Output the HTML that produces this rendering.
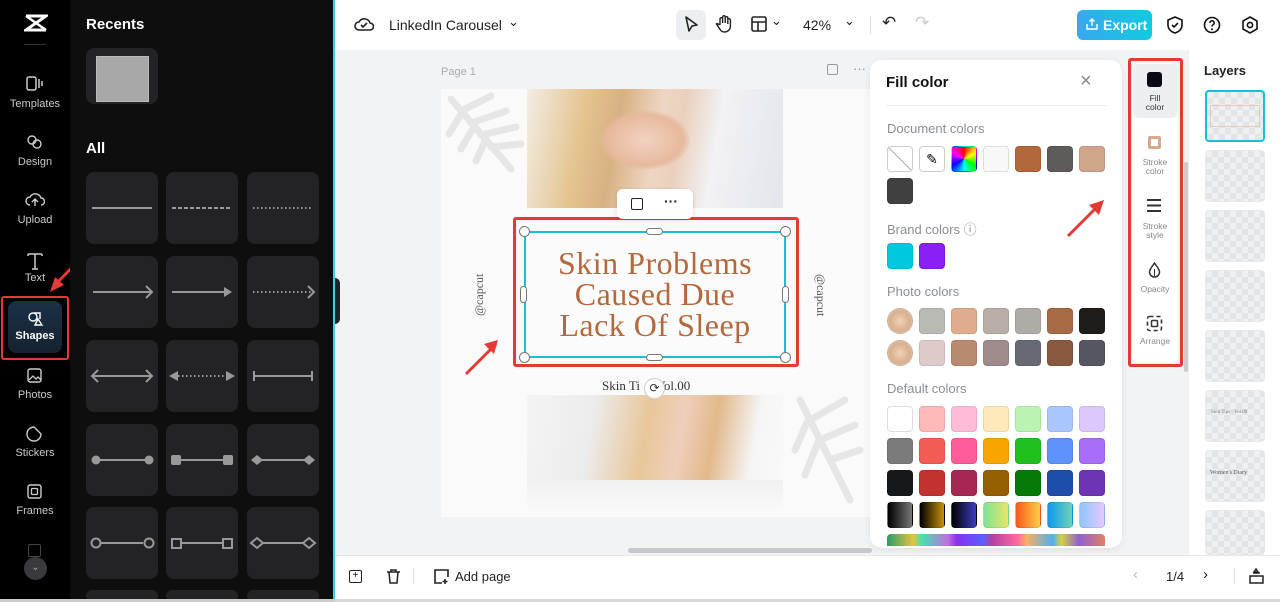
<!DOCTYPE html>
<html><head><meta charset="utf-8"><style>
*{box-sizing:border-box;margin:0;padding:0}
html{width:1280px;height:602px;overflow:hidden}
body{width:1280px;height:602px;overflow:hidden;font-family:"Liberation Sans",sans-serif;background:#f1f3f5;position:relative}
.a{position:absolute}
.nav{left:0;top:0;width:70px;height:602px;background:#000}
.nl{position:absolute;left:0;width:70px;text-align:center;color:#c9c9cc;font-size:11px}
.panel{left:70px;top:0;width:263px;height:602px;background:#0e0e0f;overflow:hidden}
.tile{position:absolute;width:72px;height:72px;background:#232326;border-radius:8px}
.tile svg{position:absolute;left:0;top:0}
.sw{position:absolute;width:26px;height:26px;border-radius:4px;border:1px solid rgba(0,0,0,.08)}
.lab{position:absolute;left:887px;color:#8a8f98;font-size:13px}
.lay{position:absolute;left:1205px;width:60px;height:52px;border-radius:4px;background-color:#eef0f2;background-image:linear-gradient(45deg,#e2e4e7 25%,transparent 25%,transparent 75%,#e2e4e7 75%),linear-gradient(45deg,#e2e4e7 25%,transparent 25%,transparent 75%,#e2e4e7 75%);background-size:12px 12px;background-position:0 0,6px 6px;border:1px solid #e6e8eb}
.tl{position:absolute;left:1130px;width:50px;text-align:center;color:#888;font-size:8.5px;line-height:9px}
</style></head><body>
<!-- nav -->
<div class="a nav">
 <svg class="a" style="left:24px;top:14px" width="24" height="18" viewBox="0 0 24 18"><path d="M2 2h20L2 16h20" stroke="#fff" stroke-width="3" fill="none"/><path d="M2 2l20 14M22 2L2 16" stroke="#fff" stroke-width="2.5" fill="none"/></svg>
 <div class="a" style="left:24px;top:44px;width:22px;height:1px;background:#333"></div>
 <svg class="a" style="left:26px;top:76px" width="18" height="16"><rect x="1" y="1" width="9" height="13" rx="2" stroke="#ccc" fill="none" stroke-width="1.5"/><path d="M13 3v9M16 5v5" stroke="#ccc" stroke-width="1.5"/></svg>
 <div class="nl" style="top:98px">Templates</div>
 <svg class="a" style="left:26px;top:134px" width="18" height="16"><circle cx="6" cy="6" r="4" stroke="#ccc" fill="none" stroke-width="1.4"/><circle cx="11" cy="10" r="4" stroke="#ccc" fill="none" stroke-width="1.4"/></svg>
 <div class="nl" style="top:156px">Design</div>
 <svg class="a" style="left:25px;top:192px" width="20" height="16"><path d="M5 13a4 4 0 010-8 6 6 0 0111 1 3.5 3.5 0 010 7M10 14V8M7 10l3-3 3 3" stroke="#ccc" fill="none" stroke-width="1.4"/></svg>
 <div class="nl" style="top:214px">Upload</div>
 <svg class="a" style="left:27px;top:252px" width="16" height="18"><path d="M1 2h14M8 2v15M1 2v2M15 2v2M5 17h6" stroke="#ccc" fill="none" stroke-width="1.5"/></svg>
 <div class="nl" style="top:272px">Text</div>
 <div class="a" style="left:1px;top:296px;width:68px;height:64px;border:2px solid #e53935;border-radius:3px"></div>
 <div class="a" style="left:8px;top:301px;width:54px;height:52px;border-radius:8px;background:linear-gradient(#1b3047,#15222f)"></div>
 <svg class="a" style="left:26px;top:310px" width="18" height="16"><path d="M8 3l6 0 0 6" stroke="#fff" fill="none" stroke-width="1.4"/><circle cx="7" cy="7" r="4" stroke="#fff" fill="none" stroke-width="1.4"/><path d="M9 15l3-6 4 6z" stroke="#fff" fill="none" stroke-width="1.4"/></svg>
 <div class="nl" style="top:330px;color:#fff;font-weight:bold">Shapes</div>
 <svg class="a" style="left:27px;top:368px" width="16" height="16"><rect x="1" y="1" width="13" height="13" rx="2" stroke="#ccc" fill="none" stroke-width="1.4"/><path d="M2 12l4-4 3 3 2-2 3 3" stroke="#ccc" fill="none" stroke-width="1.3"/></svg>
 <div class="nl" style="top:389px">Photos</div>
 <svg class="a" style="left:26px;top:426px" width="17" height="16"><path d="M8 1a7 7 0 107 7l-7-7z" stroke="#ccc" fill="none" stroke-width="1.4"/></svg>
 <div class="nl" style="top:447px">Stickers</div>
 <svg class="a" style="left:27px;top:484px" width="16" height="16"><rect x="1" y="1" width="13" height="13" rx="2" stroke="#ccc" fill="none" stroke-width="1.4"/><rect x="4.5" y="4.5" width="6" height="6" rx="1" stroke="#ccc" fill="none" stroke-width="1.3"/></svg>
 <div class="nl" style="top:505px">Frames</div>
 <div class="a" style="left:28px;top:544px;width:13px;height:13px;border:1.5px solid #444;border-radius:2px"></div>
 <div class="a" style="left:24px;top:557px;width:23px;height:23px;border-radius:50%;background:#3a3a3e;color:#aaa;font-size:10px;text-align:center;line-height:22px">⌄</div>
</div>
<svg class="a" style="left:47px;top:252px" width="40" height="44"><path d="M37 3L9 32" stroke="#e53935" stroke-width="3"/><path d="M3 40l5-15 9 8z" fill="#e53935"/></svg>
<!-- panel -->
<div class="a panel">
 <div class="a" style="left:16px;top:16px;color:#fff;font-weight:bold;font-size:15px">Recents</div>
 <div class="tile" style="left:16px;top:48px;height:56px;width:72px"><div class="a" style="left:10px;top:8px;width:53px;height:46px;background:#a8a8a8;border:1px solid #bbb"></div></div>
 <div class="a" style="left:16px;top:140px;color:#fff;font-weight:bold;font-size:15px">All</div>
 <div class="tile" style="left:16px;top:172px"><svg width="72" height="72"><path d="M6 36h60" stroke="#999" stroke-width="2"/></svg></div>
 <div class="tile" style="left:96px;top:172px"><svg width="72" height="72"><path d="M6 36h60" stroke="#999" stroke-width="2" stroke-dasharray="4 2"/></svg></div>
 <div class="tile" style="left:177px;top:172px"><svg width="72" height="72"><path d="M6 36h60" stroke="#999" stroke-width="2" stroke-dasharray="1.5 2.5"/></svg></div>
 <div class="tile" style="left:16px;top:256px"><svg width="72" height="72"><path d="M7 36h59M60 30l6 6-6 6" stroke="#999" stroke-width="2" fill="none"/></svg></div>
 <div class="tile" style="left:96px;top:256px"><svg width="72" height="72"><path d="M6 36h52" stroke="#999" stroke-width="2"/><path d="M58 31l8 5-8 5z" fill="#999"/></svg></div>
 <div class="tile" style="left:177px;top:256px"><svg width="72" height="72"><path d="M6 36h58" stroke="#999" stroke-width="2" stroke-dasharray="1.5 2.5"/><path d="M61 30l6 6-6 6" stroke="#999" stroke-width="2" fill="none"/></svg></div>
 <div class="tile" style="left:16px;top:340px"><svg width="72" height="72"><path d="M6 36h60M12 30l-6 6 6 6M60 30l6 6-6 6" stroke="#999" stroke-width="2" fill="none"/></svg></div>
 <div class="tile" style="left:96px;top:340px"><svg width="72" height="72"><path d="M12 36h48" stroke="#999" stroke-width="2" stroke-dasharray="1.5 2.5"/><path d="M3 36l9-5v10zM69 36l-9-5v10z" fill="#999"/></svg></div>
 <div class="tile" style="left:177px;top:340px"><svg width="72" height="72"><path d="M7 36h58M7 31v10M65 31v10" stroke="#999" stroke-width="2"/></svg></div>
 <div class="tile" style="left:16px;top:424px"><svg width="72" height="72"><path d="M8 36h56" stroke="#999" stroke-width="2"/><circle cx="10" cy="36" r="4.5" fill="#999"/><circle cx="63" cy="36" r="4.5" fill="#999"/></svg></div>
 <div class="tile" style="left:96px;top:424px"><svg width="72" height="72"><path d="M8 36h56" stroke="#999" stroke-width="2"/><rect x="5" y="31" width="10" height="10" rx="2" fill="#999"/><rect x="57" y="31" width="10" height="10" rx="2" fill="#999"/></svg></div>
 <div class="tile" style="left:177px;top:424px"><svg width="72" height="72"><path d="M8 36h56" stroke="#999" stroke-width="2"/><path d="M4 36l6-5 6 5-6 5zM56 36l6-5 6 5-6 5z" fill="#999"/></svg></div>
 <div class="tile" style="left:16px;top:507px"><svg width="72" height="72"><path d="M15 36h42" stroke="#999" stroke-width="2"/><circle cx="10" cy="36" r="4.5" stroke="#999" stroke-width="2" fill="none"/><circle cx="63" cy="36" r="4.5" stroke="#999" stroke-width="2" fill="none"/></svg></div>
 <div class="tile" style="left:96px;top:507px"><svg width="72" height="72"><path d="M15 36h42" stroke="#999" stroke-width="2"/><rect x="6" y="32" width="9" height="9" stroke="#999" stroke-width="2" fill="none"/><rect x="57" y="32" width="9" height="9" stroke="#999" stroke-width="2" fill="none"/></svg></div>
 <div class="tile" style="left:177px;top:507px"><svg width="72" height="72"><path d="M16 36h40" stroke="#999" stroke-width="2"/><path d="M4 36l6-5 6 5-6 5zM56 36l6-5 6 5-6 5z" stroke="#999" stroke-width="2" fill="none"/></svg></div>
 <div class="tile" style="left:16px;top:590px;height:12px"></div><div class="tile" style="left:96px;top:590px;height:12px"></div><div class="tile" style="left:177px;top:590px;height:12px"></div>
</div>
<div class="a" style="left:333px;top:0;width:2px;height:602px;background:#3fd2e0"></div>
<div class="a" style="left:335px;top:278px;width:5px;height:46px;background:#222;border-radius:0 6px 6px 0"></div>
<!-- top bar -->
<div class="a" style="left:335px;top:0;width:945px;height:50px;background:#fff"></div>
<svg class="a" style="left:354px;top:16px" width="20" height="16"><path d="M5 14a4 4 0 010-8 6 6 0 0111 1 3.5 3.5 0 010 7z M7 9l2 2 4-4" stroke="#222" fill="none" stroke-width="1.6"/></svg>
<div class="a" style="left:389px;top:17px;font-size:14px;color:#222">LinkedIn Carousel</div>
<div class="a" style="left:508px;top:14px;font-size:13px;color:#222">⌄</div>
<div class="a" style="left:676px;top:10px;width:30px;height:30px;background:#eceef1;border-radius:6px"></div>
<svg class="a" style="left:682px;top:15px" width="18" height="20"><path d="M4 2l11 8-5 1-3 5z" stroke="#222" fill="none" stroke-width="1.6" stroke-linejoin="round"/></svg>
<svg class="a" style="left:715px;top:14px" width="18" height="20"><path d="M5 11V5a1.3 1.3 0 012.6 0v4V3a1.3 1.3 0 012.6 0v6V4a1.3 1.3 0 012.6 0v6V6a1.3 1.3 0 012.6 0v6c0 4-3 6-6 6-3 0-4-2-6-5l-2-3c1-1 2 0 3 1" stroke="#222" fill="none" stroke-width="1.4"/></svg>
<svg class="a" style="left:751px;top:16px" width="16" height="16"><rect x="1" y="1" width="14" height="14" rx="1.5" stroke="#222" fill="none" stroke-width="1.6"/><path d="M1 6h14M7 6v9" stroke="#222" stroke-width="1.6"/></svg>
<div class="a" style="left:771px;top:13px;font-size:13px;color:#222">⌄</div>
<div class="a" style="left:803px;top:17px;font-size:14px;color:#222">42%</div>
<div class="a" style="left:844px;top:13px;font-size:13px;color:#222">⌄</div>
<div class="a" style="left:870px;top:16px;width:1px;height:18px;background:#ddd"></div>
<div class="a" style="left:882px;top:13px;font-size:17px;color:#222">↶</div>
<div class="a" style="left:915px;top:13px;font-size:17px;color:#ccc">↷</div>
<div class="a" style="left:1077px;top:10px;width:75px;height:30px;border-radius:6px;background:linear-gradient(90deg,#38a7f0,#10cbe0);color:#fff;font-weight:bold;font-size:14px;line-height:30px;padding-left:26px">Export</div>
<svg class="a" style="left:1085px;top:17px" width="14" height="14"><path d="M2 7v5h10V7M7 9V2M4.5 4.5L7 2l2.5 2.5" stroke="#fff" fill="none" stroke-width="1.4"/></svg>
<svg class="a" style="left:1166px;top:16px" width="18" height="18"><path d="M9 1l7 3v5c0 4-3 7-7 8-4-1-7-4-7-8V4z M6 9l2 2 4-4" stroke="#111" fill="none" stroke-width="1.6"/></svg>
<svg class="a" style="left:1203px;top:16px" width="18" height="18"><circle cx="9" cy="9" r="7.5" stroke="#111" fill="none" stroke-width="1.6"/><path d="M6.8 7a2.2 2.2 0 114 1.2c-1 .8-1.8 1-1.8 2.3" stroke="#111" fill="none" stroke-width="1.5"/><circle cx="9" cy="13.3" r="1" fill="#111"/></svg>
<svg class="a" style="left:1241px;top:16px" width="18" height="18"><path d="M9 1l7 4v8l-7 4-7-4V5z" stroke="#111" fill="none" stroke-width="1.6"/><circle cx="9" cy="9" r="2.6" stroke="#111" fill="none" stroke-width="1.6"/></svg>
<!-- canvas -->
<div class="a" style="left:441px;top:66px;font-size:11px;color:#aaa">Page 1</div>
<div class="a" style="left:827px;top:64px;width:11px;height:11px;border:1.5px solid #999;border-radius:2px"></div>
<div class="a" style="left:853px;top:61px;font-size:13px;color:#888">···</div>
<div class="a" style="left:441px;top:89px;width:430px;height:428px;background:#fafafa"></div>
<svg class="a" style="left:441px;top:89px" width="90" height="90"><g stroke="#e6e6e6" stroke-width="7" fill="none" stroke-linecap="round"><path d="M10 10l60 70"/><path d="M20 22l30-15M30 34l35-12M40 46l35-8M50 58l30-3M22 22L8 45M34 36L20 60M45 50L35 72"/></g></svg>
<svg class="a" style="left:790px;top:380px" width="80" height="130"><g stroke="#e6e6e6" stroke-width="7" fill="none" stroke-linecap="round"><path d="M10 20l50 100"/><path d="M20 40l35-20M30 60l35-15M40 80l30-10M18 40L5 70M28 62L15 95"/></g></svg>
<div class="a" style="left:527px;top:89px;width:256px;height:119px;background:linear-gradient(100deg,#f3ede5 0%,#e4c48f 22%,#d7b183 35%,#efd6c4 50%,#ead0bd 58%,#f2f2f5 72%,#e3e5ec 100%)"></div>
<div class="a" style="left:600px;top:110px;width:90px;height:60px;border-radius:50%;background:radial-gradient(#f2d2c0,#e7b99d 60%,transparent 72%)"></div>
<div class="a" style="left:527px;top:395px;width:256px;height:122px;background:linear-gradient(100deg,#f4f4f4 0%,#ececec 25%,#e8c79a 45%,#efcfbb 58%,#e2b98b 70%,#f5f5f5 85%,#fafafa 100%)"></div>
<div class="a" style="left:527px;top:480px;width:256px;height:37px;background:linear-gradient(#f0f0f0,#fbfbfb)"></div>
<div class="a" style="left:472px;top:250px;width:20px;height:90px;font-family:'Liberation Serif',serif;font-size:12px;color:#555;writing-mode:vertical-rl;transform:rotate(180deg);text-align:center">@capcut</div>
<div class="a" style="left:808px;top:250px;width:20px;height:90px;font-family:'Liberation Serif',serif;font-size:12px;color:#555;writing-mode:vertical-rl;text-align:center">@capcut</div>
<div class="a" style="left:602px;top:378px;font-family:'Liberation Serif',serif;font-size:13px;color:#333">Skin Ti&nbsp;&nbsp;&nbsp;&nbsp;&nbsp;Vol.00</div>
<div class="a" style="left:524px;top:231px;width:262px;height:127px;background:#fbfbfb"></div>
<div class="a" style="left:524px;top:231px;width:262px;height:127px;border:2px solid #16c0d6"></div>
<div class="a" style="left:513px;top:217px;width:286px;height:150px;border:3px solid #e53935;border-radius:3px"></div>
<div class="a" style="left:524px;top:248px;width:262px;text-align:center;font-family:'Liberation Serif',serif;font-size:32px;line-height:31px;color:#b4683d;letter-spacing:0.5px">Skin Problems<br>Caused Due<br>Lack Of Sleep</div>
<div class="a" style="left:519px;top:226px;width:11px;height:11px;border-radius:50%;background:#fff;border:1px solid #777"></div>
<div class="a" style="left:780px;top:226px;width:11px;height:11px;border-radius:50%;background:#fff;border:1px solid #777"></div>
<div class="a" style="left:519px;top:352px;width:11px;height:11px;border-radius:50%;background:#fff;border:1px solid #777"></div>
<div class="a" style="left:780px;top:352px;width:11px;height:11px;border-radius:50%;background:#fff;border:1px solid #777"></div>
<div class="a" style="left:646px;top:228px;width:17px;height:7px;border-radius:4px;background:#fff;border:1px solid #777"></div>
<div class="a" style="left:646px;top:354px;width:17px;height:7px;border-radius:4px;background:#fff;border:1px solid #777"></div>
<div class="a" style="left:520px;top:286px;width:7px;height:17px;border-radius:4px;background:#fff;border:1px solid #777"></div>
<div class="a" style="left:782px;top:286px;width:7px;height:17px;border-radius:4px;background:#fff;border:1px solid #777"></div>
<div class="a" style="left:644px;top:378px;width:21px;height:21px;border-radius:50%;background:#fff;border:1px solid #ccc;font-size:12px;text-align:center;line-height:19px;color:#333">⟳</div>
<div class="a" style="left:617px;top:189px;width:76px;height:30px;background:#fff;border-radius:6px;box-shadow:0 1px 4px rgba(0,0,0,.15)"></div>
<div class="a" style="left:631px;top:198px;width:12px;height:12px;border:1.5px solid #222;border-radius:2px"></div>
<div class="a" style="left:664px;top:193px;font-size:14px;font-weight:bold;color:#222">···</div>
<svg class="a" style="left:462px;top:338px" width="40" height="40"><path d="M4 36L34 6" stroke="#e53935" stroke-width="3"/><path d="M36 2l-4 14-10-10z" fill="#e53935"/></svg>
<div class="a" style="left:628px;top:548px;width:244px;height:5px;background:#c5c8cc;border-radius:3px"></div>
<!-- fill panel -->
<div class="a" style="left:870px;top:60px;width:252px;height:488px;background:#fff;border-radius:12px;box-shadow:0 2px 8px rgba(0,0,0,.08)"></div>
<div class="a" style="left:886px;top:74px;font-size:15px;font-weight:bold;color:#111">Fill color</div>
<div class="a" style="left:1080px;top:70px;font-size:20px;color:#888">×</div>
<div class="a" style="left:886px;top:105px;width:221px;height:1px;background:#eee"></div>
<div class="lab" style="top:121px">Document colors</div>
<div class="sw" style="left:887px;top:146px;background:linear-gradient(45deg,#fff 48%,#aaa 49%,#aaa 51%,#fff 52%);border-color:#ccc"></div>
<div class="sw" style="left:919px;top:146px;background:#fff;border-color:#ccc;text-align:center;font-size:14px;line-height:24px">✎</div>
<div class="sw" style="left:951px;top:146px;background:conic-gradient(red,yellow,lime,cyan,blue,magenta,red)"></div>
<div class="sw" style="left:983px;top:146px;background:#f8f8f8;border-color:#ddd"></div>
<div class="sw" style="left:1015px;top:146px;background:#b3673d"></div>
<div class="sw" style="left:1047px;top:146px;background:#5f5b5a"></div>
<div class="sw" style="left:1079px;top:146px;background:#d1a48c"></div>
<div class="sw" style="left:887px;top:178px;background:#404040"></div>
<div class="lab" style="top:219px">Brand colors ⓘ</div>
<div class="sw" style="left:887px;top:243px;background:#00c8de"></div>
<div class="sw" style="left:919px;top:243px;background:#8a1ff6"></div>
<div class="lab" style="top:284px">Photo colors</div>
<div class="sw" style="left:887px;top:308px;border-radius:50%;background:radial-gradient(#f1d2b8,#d8ae8e 60%,#eee)"></div>
<div class="sw" style="left:919px;top:308px;background:#babab4"></div>
<div class="sw" style="left:951px;top:308px;background:#dfad8d"></div>
<div class="sw" style="left:983px;top:308px;background:#b9aea8"></div>
<div class="sw" style="left:1015px;top:308px;background:#afaca8"></div>
<div class="sw" style="left:1047px;top:308px;background:#a86a45"></div>
<div class="sw" style="left:1079px;top:308px;background:#201c19"></div>
<div class="sw" style="left:887px;top:340px;border-radius:50%;background:radial-gradient(#f1d2b8,#d8ae8e 60%,#eee)"></div>
<div class="sw" style="left:919px;top:340px;background:#dccbc8"></div>
<div class="sw" style="left:951px;top:340px;background:#b88a70"></div>
<div class="sw" style="left:983px;top:340px;background:#9f8b8c"></div>
<div class="sw" style="left:1015px;top:340px;background:#676a72"></div>
<div class="sw" style="left:1047px;top:340px;background:#88583f"></div>
<div class="sw" style="left:1079px;top:340px;background:#565660"></div>
<div class="lab" style="top:381px">Default colors</div>
<div class="sw" style="left:887px;top:406px;background:#fff;border-color:#ddd"></div>
<div class="sw" style="left:919px;top:406px;background:#feb8b8"></div>
<div class="sw" style="left:951px;top:406px;background:#ffbcd9"></div>
<div class="sw" style="left:983px;top:406px;background:#ffe8b9"></div>
<div class="sw" style="left:1015px;top:406px;background:#b9f5b0"></div>
<div class="sw" style="left:1047px;top:406px;background:#aac6ff"></div>
<div class="sw" style="left:1079px;top:406px;background:#dcc8ff"></div>
<div class="sw" style="left:887px;top:438px;background:#7b7b7b"></div>
<div class="sw" style="left:919px;top:438px;background:#f35c55"></div>
<div class="sw" style="left:951px;top:438px;background:#fe5c9b"></div>
<div class="sw" style="left:983px;top:438px;background:#f9a500"></div>
<div class="sw" style="left:1015px;top:438px;background:#1fc01e"></div>
<div class="sw" style="left:1047px;top:438px;background:#5d93fb"></div>
<div class="sw" style="left:1079px;top:438px;background:#a86ef8"></div>
<div class="sw" style="left:887px;top:470px;background:#17181c"></div>
<div class="sw" style="left:919px;top:470px;background:#c2322f"></div>
<div class="sw" style="left:951px;top:470px;background:#a52755"></div>
<div class="sw" style="left:983px;top:470px;background:#955e00"></div>
<div class="sw" style="left:1015px;top:470px;background:#047a08"></div>
<div class="sw" style="left:1047px;top:470px;background:#1e4ea9"></div>
<div class="sw" style="left:1079px;top:470px;background:#6d35b5"></div>
<div class="sw" style="left:887px;top:502px;background:linear-gradient(90deg,#000,#777)"></div>
<div class="sw" style="left:919px;top:502px;background:linear-gradient(90deg,#000,#c9910b)"></div>
<div class="sw" style="left:951px;top:502px;background:linear-gradient(90deg,#000,#3d3cc0)"></div>
<div class="sw" style="left:983px;top:502px;background:linear-gradient(90deg,#7ee494,#e8e56a)"></div>
<div class="sw" style="left:1015px;top:502px;background:linear-gradient(90deg,#f8591b,#fcce4a)"></div>
<div class="sw" style="left:1047px;top:502px;background:linear-gradient(90deg,#0f98ef,#6ed3b8)"></div>
<div class="sw" style="left:1079px;top:502px;background:linear-gradient(90deg,#90c3ff,#e5c9ff)"></div>
<div class="a" style="left:887px;top:534px;width:218px;height:12px;background:linear-gradient(90deg,#2a9b6a,#e2c440 12%,#45e0b0 16%,#c06ee0 28%,#8a30f0 32%,#5a60ff 44%,#b040a0 48%,#ff6a9c 60%,#f8b060 64%,#50b0f0 76%,#d8d040 80%,#9060d0 88%,#e08060);border-radius:4px 4px 0 0"></div>
<svg class="a" style="left:1064px;top:196px" width="44" height="44"><path d="M4 40L34 10" stroke="#e53935" stroke-width="3"/><path d="M40 4l-5 15-10-10z" fill="#e53935"/></svg>
<!-- toolbar -->
<div class="a" style="left:1132px;top:63px;width:46px;height:300px;background:#fff;border-radius:8px"></div>
<div class="a" style="left:1133px;top:64px;width:45px;height:54px;background:#eceef1;border-radius:6px"></div>
<div class="a" style="left:1147px;top:72px;width:15px;height:15px;background:#050a14;border-radius:3px"></div>
<div class="tl" style="top:94px;color:#333">Fill<br>color</div>
<div class="a" style="left:1148px;top:136px;width:13px;height:13px;border:3px solid #d8a88f;border-radius:2px"></div>
<div class="tl" style="top:158px">Stroke<br>color</div>
<svg class="a" style="left:1146px;top:198px" width="16" height="16"><path d="M1 2h14M1 7.5h14M1 13h14" stroke="#333" stroke-width="2"/></svg>
<div class="tl" style="top:222px">Stroke<br>style</div>
<svg class="a" style="left:1147px;top:262px" width="15" height="16"><path d="M7.5 1C5 5 2.5 7 2.5 10a5 5 0 0010 0c0-3-2.5-5-5-9z" stroke="#333" fill="none" stroke-width="1.5"/><path d="M7.5 7v7" stroke="#333"/></svg>
<div class="tl" style="top:285px">Opacity</div>
<svg class="a" style="left:1146px;top:315px" width="17" height="17"><rect x="1.5" y="1.5" width="14" height="14" rx="2" stroke="#333" fill="none" stroke-width="1.6" stroke-dasharray="4 3"/><rect x="5.5" y="5.5" width="6" height="6" rx="1" stroke="#333" fill="none" stroke-width="1.5"/></svg>
<div class="tl" style="top:337px">Arrange</div>
<div class="a" style="left:1128px;top:58px;width:55px;height:309px;border:3px solid #e53935;border-radius:3px"></div>
<div class="a" style="left:1184px;top:162px;width:4px;height:210px;background:#ccc;border-radius:2px"></div>
<!-- layers -->
<div class="a" style="left:1188px;top:50px;width:92px;height:505px;background:#fff;border-left:1px solid #eee"></div>
<div class="a" style="left:1204px;top:63px;font-size:13px;font-weight:bold;color:#222">Layers</div>
<div class="lay" style="top:90px;height:52px;border:2px solid #16c0d6"></div>
<div class="a" style="left:1210px;top:105px;width:50px;height:22px;border:1px solid #e8c8b8"></div>
<div class="lay" style="top:150px"></div>
<div class="lay" style="top:210px"></div>
<div class="lay" style="top:270px"></div>
<div class="lay" style="top:330px"></div>
<div class="lay" style="top:390px"></div>
<div class="lay" style="top:450px"></div>
<div class="lay" style="top:510px;height:45px"></div>
<div class="a" style="left:1211px;top:410px;font-size:5px;color:#777;font-family:'Liberation Serif',serif">Skin Tips · Vol.00</div>
<div class="a" style="left:1210px;top:470px;font-size:6px;color:#555;font-family:'Liberation Serif',serif">Women's Diary</div>
<!-- bottom bar -->
<div class="a" style="left:335px;top:555px;width:945px;height:44px;background:#fff;border-top:1px solid #e8e8e8"></div>
<div class="a" style="left:335px;top:599px;width:945px;height:3px;background:#d8d8d8"></div>
<div class="a" style="left:0;top:599px;width:335px;height:3px;background:#ccc"></div>
<div class="a" style="left:349px;top:570px;width:13px;height:13px;border:1.6px solid #222;border-radius:2px;font-size:10px;line-height:10px;text-align:center">+</div>
<svg class="a" style="left:386px;top:569px" width="15" height="15"><path d="M1 3h13M5 3V1h5v2M3 3l1 11h7l1-11" stroke="#222" fill="none" stroke-width="1.5"/></svg>
<div class="a" style="left:413px;top:568px;width:1px;height:16px;background:#ddd"></div>
<svg class="a" style="left:433px;top:568px" width="17" height="17"><path d="M9 15H2V2h13v7M12 11v5M9.5 13.5h5" stroke="#222" fill="none" stroke-width="1.6"/></svg>
<div class="a" style="left:455px;top:569px;font-size:13px;color:#222">Add page</div>
<div class="a" style="left:1133px;top:566px;font-size:15px;color:#bbb">‹</div>
<div class="a" style="left:1166px;top:569px;font-size:13px;color:#222">1/4</div>
<div class="a" style="left:1203px;top:566px;font-size:15px;color:#222">›</div>
<div class="a" style="left:1234px;top:568px;width:1px;height:16px;background:#ddd"></div>
<svg class="a" style="left:1248px;top:568px" width="17" height="16"><path d="M2 8h13v7H2zM5 5h7M8 1l-2 3h4z" stroke="#222" fill="none" stroke-width="1.5"/></svg>
</body></html>
